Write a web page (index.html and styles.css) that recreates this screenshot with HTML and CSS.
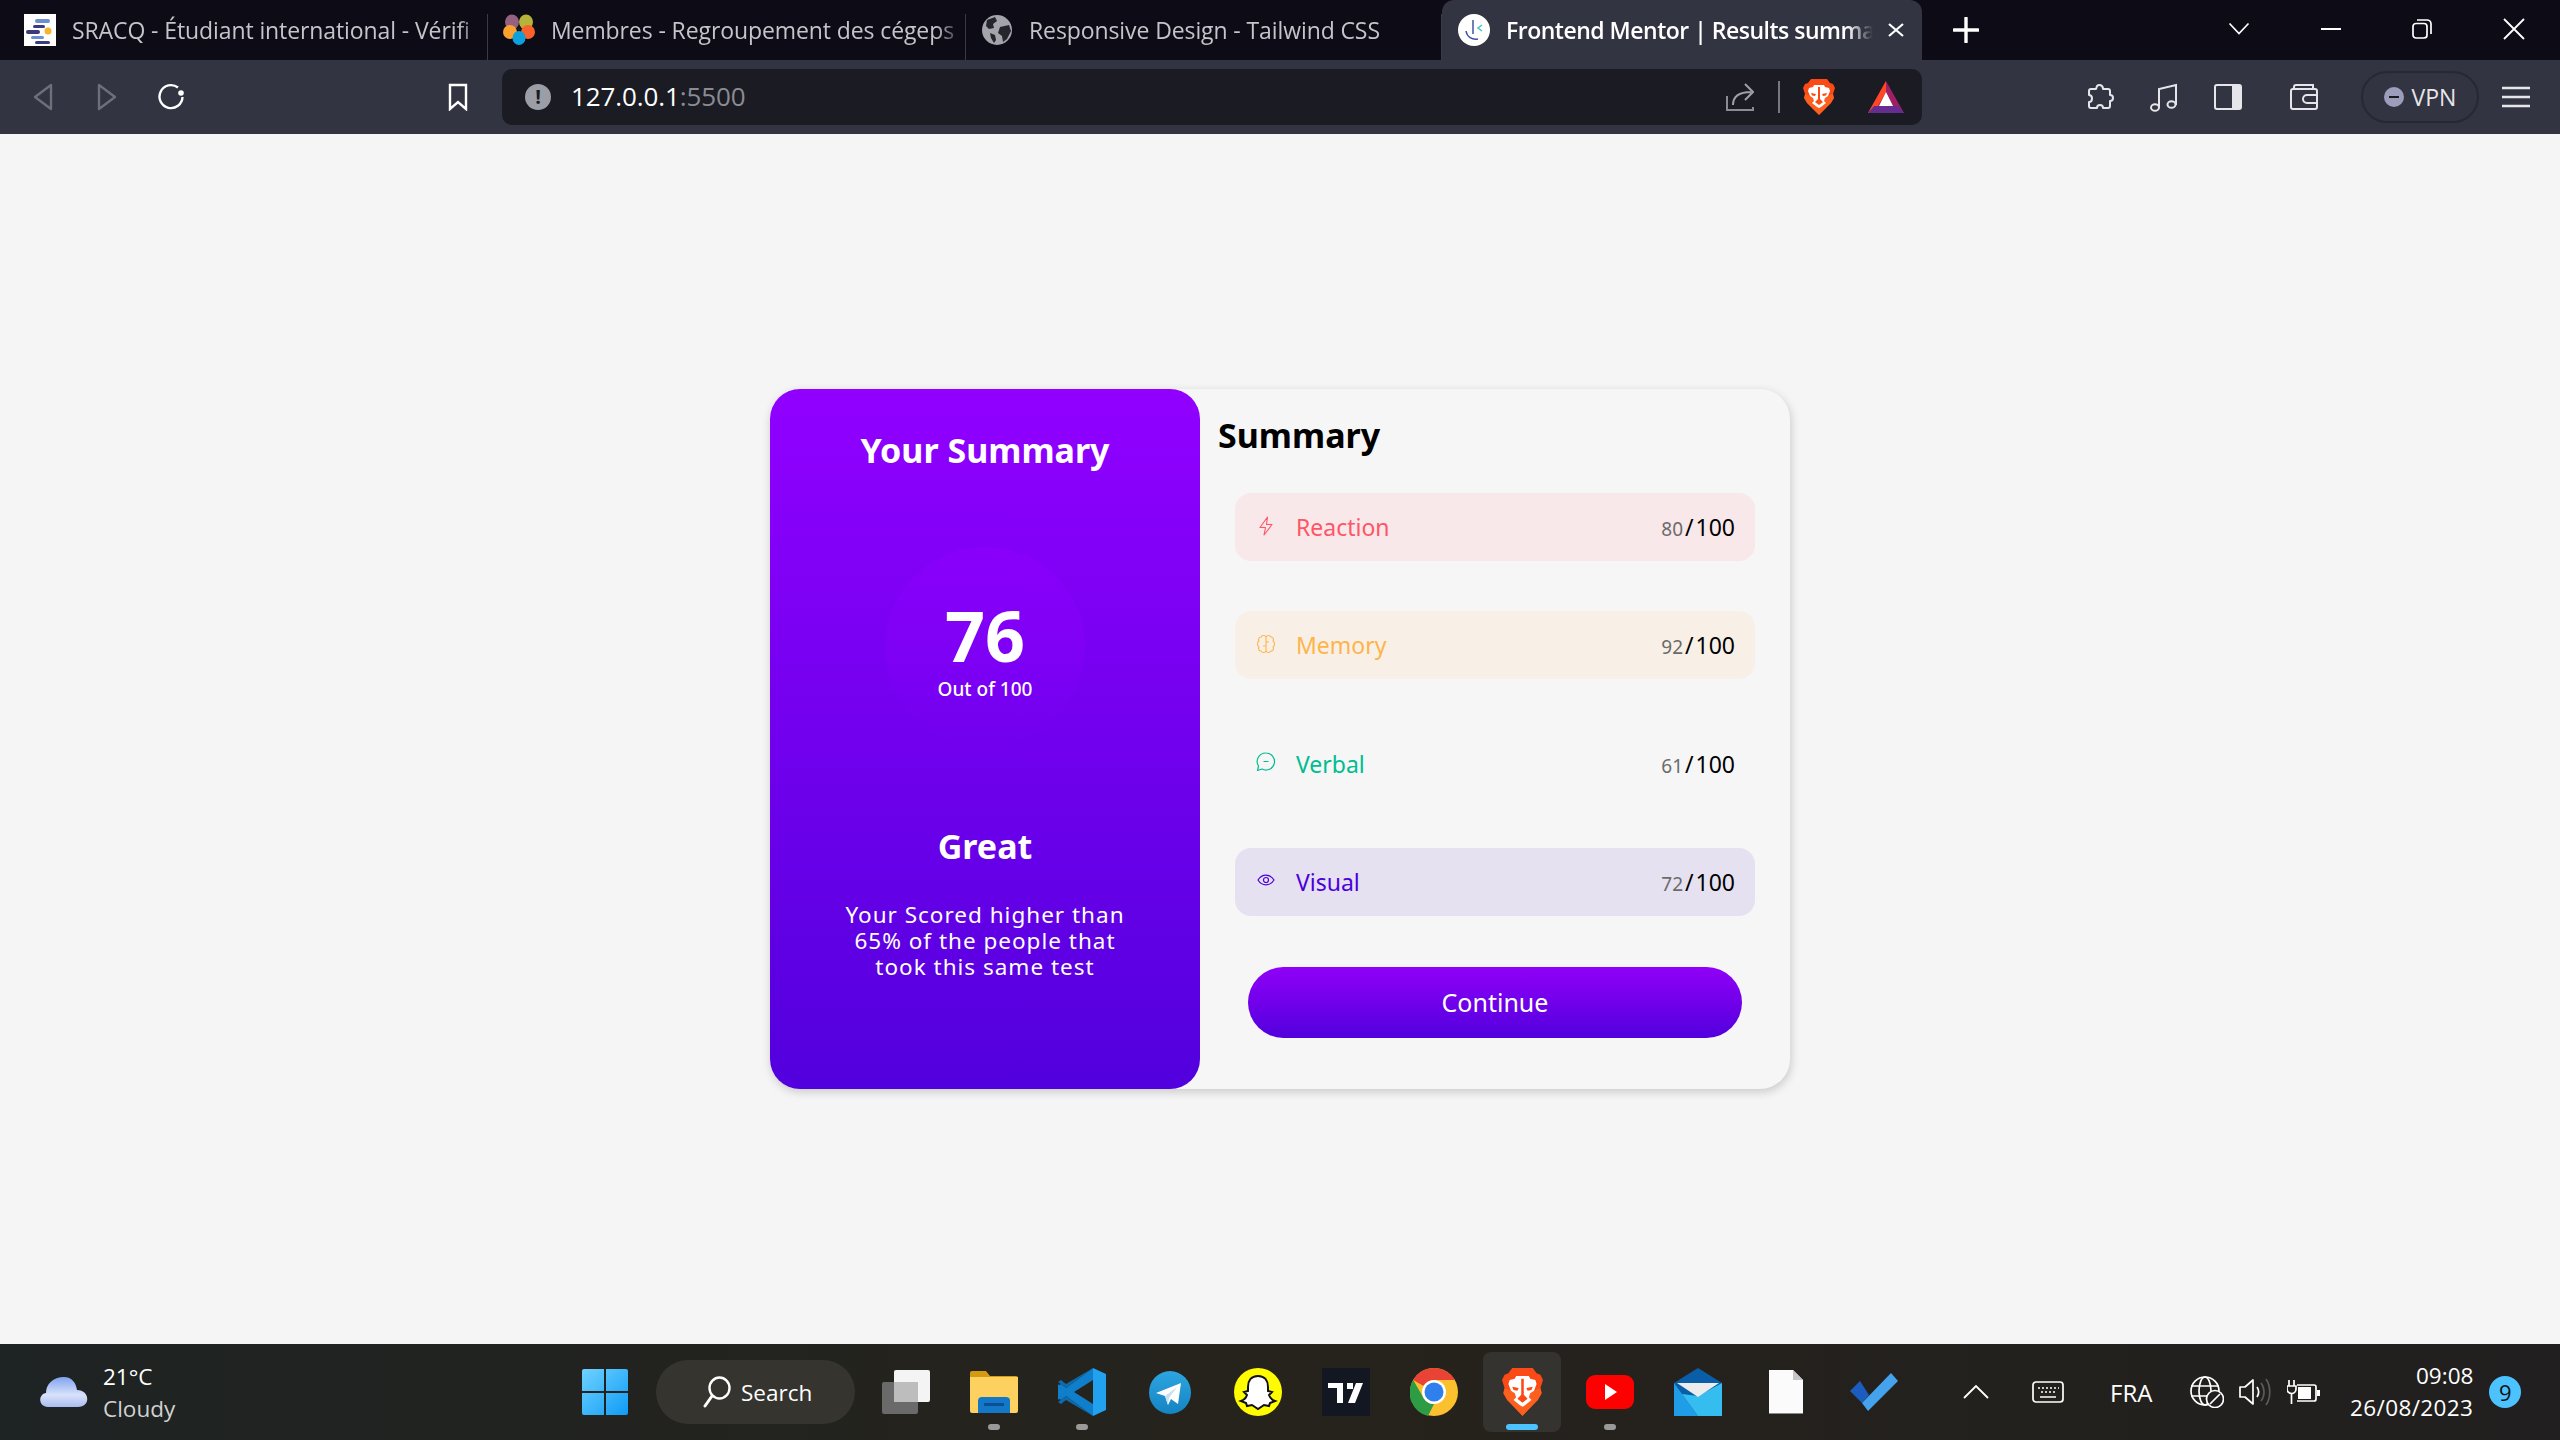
FILE: index.html
```html
<!DOCTYPE html>
<html lang="en">
  <head>
    <meta charset="UTF-8" />
    <meta name="viewport" content="width=device-width, initial-scale=1.0" />
    <title>Frontend Mentor | Results summary</title>
    <link rel="stylesheet" href="styles.css">
  </head>
  <body>
    <svg class="defs" width="0" height="0">
      <symbol id="lion" viewBox="0 0 32 36">
        <path fill="#fb4a16" d="M8 0h16l3 4 3 1 2 4-2 6 1 4-3 5-4 4-6 6-2 2-2-2-6-6-4-4-3-5 1-4-2-6 2-4 3-1z"/>
        <path fill="#ff7a2a" d="M16 36l-2-2-6-6-4-4-3-5 1-4 14 6 14-6 1 4-3 5-4 4-6 6z" opacity=".45"/>
        <path fill="#fff" d="M11 6h10l1 2 4 1 1 3-2 5-3 2-1 3 2 2-5 4-2 1-2-1-5-4 2-2-1-3-3-2-2-5 1-3 4-1z"/>
        <path fill="#fb4a16" d="M15 8h2v12l3 3-4 3-4-3 3-3zM8 14l5 1-1 2-3-.5zM24 14l-5 1 1 2 3-.5z"/>
      </symbol>
    </svg>

    <div class="tabbar">
      <div class="tab tab-first">
        <svg class="favicon" width="32" height="32" viewBox="0 0 32 32">
          <rect width="32" height="32" fill="#fff"/>
          <rect x="11" y="5" width="15" height="4" rx="2" fill="#6d8fd0"/>
          <rect x="9" y="11" width="12" height="3" rx="1.5" fill="#3a3a80"/>
          <rect x="2" y="16" width="14" height="4" rx="2" fill="#3a3a80"/>
          <rect x="7" y="22" width="13" height="3" rx="1.5" fill="#6d8fd0"/>
          <rect x="11" y="27" width="15" height="3" rx="1.5" fill="#3a3a80"/>
          <circle cx="24" cy="17" r="3.5" fill="#f7b32b"/>
        </svg>
        <span class="tab-title">SRACQ - Étudiant international - Vérifi</span>
      </div>
      <div class="tab">
        <svg class="favicon" width="32" height="32" viewBox="0 0 32 32">
          <ellipse cx="9" cy="8" rx="7" ry="7.5" fill="#95617e"/>
          <ellipse cx="23" cy="8" rx="7" ry="7.5" fill="#b5b33a"/>
          <ellipse cx="7" cy="18" rx="7" ry="7" fill="#fba12f"/>
          <ellipse cx="25" cy="18" rx="7" ry="7" fill="#f9622a"/>
          <ellipse cx="16" cy="24" rx="6.5" ry="7" fill="#0ea0dd"/>
          <circle cx="16" cy="15" r="2" fill="#1a1a22"/>
        </svg>
        <span class="tab-title">Membres - Regroupement des cégeps</span>
      </div>
      <div class="tab tab-third">
        <svg class="favicon" width="32" height="32" viewBox="0 0 32 32">
          <circle cx="16" cy="16" r="15" fill="#a3a5ab"/>
          <path fill="#24252d" d="M6 6l8-3 2 4-4 3 1 4-5 1-3-3zM19 13l9-2 2 6-4 8-4 3-1-6-4-3zM9 19l5 2 1 5-2 3-3-5z"/>
        </svg>
        <span class="tab-title">Responsive Design - Tailwind CSS</span>
      </div>
      <div class="tab tab-active">
        <svg class="favicon" width="32" height="32" viewBox="0 0 32 32">
          <circle cx="16" cy="16" r="16" fill="#fff"/>
          <path d="M15 6v14" stroke="#3e54a3" stroke-width="1.5" fill="none"/>
          <path d="M8 17c1 6 6 9 12 8" stroke="#3e54a3" stroke-width="1.5" fill="none"/>
          <path d="M24 11l-4 3 4 3" stroke="#3ec9c4" stroke-width="1.5" fill="none"/>
        </svg>
        <span class="tab-title">Frontend Mentor | Results summa</span>
        <svg class="tab-close" width="16" height="14" viewBox="0 0 16 14">
          <path d="M1 1l14 12M15 1L1 13" stroke="#fff" stroke-width="2.2"/>
        </svg>
      </div>
      <svg class="new-tab" width="26" height="26" viewBox="0 0 26 26">
        <path d="M13 1v24M1 13h24" stroke="#fff" stroke-width="3.4" stroke-linecap="round"/>
      </svg>
      <div class="window-controls">
        <svg class="win-btn" width="22" height="14" viewBox="0 0 22 14">
          <path d="M1.500 1.500l9.500 10 9.500-10" stroke="#fff" stroke-width="1.700" fill="none"/>
        </svg>
        <svg class="win-btn" width="20" height="4" viewBox="0 0 20 4">
          <path d="M0 2h20" stroke="#fff" stroke-width="2"/>
        </svg>
        <svg class="win-btn" width="20" height="20" viewBox="0 0 20 20">
          <rect x="1" y="4.500" width="14" height="14.500" rx="3" stroke="#fff" stroke-width="1.700" fill="none"/>
          <path d="M5 1h10a4 4 0 0 1 4 4v10" stroke="#fff" stroke-width="1.700" fill="none"/>
        </svg>
        <svg class="win-btn" width="22" height="22" viewBox="0 0 22 22">
          <path d="M1 1l20 20M21 1L1 21" stroke="#fff" stroke-width="1.800"/>
        </svg>
      </div>
    </div>

    <div class="toolbar">
      <div class="tool">
        <svg width="22" height="28" viewBox="0 0 22 28">
          <path d="M19 2L3 14l16 12z" stroke="#6d6f79" stroke-width="2.400" fill="none" stroke-linejoin="round"/>
        </svg>
      </div>
      <div class="tool">
        <svg width="22" height="28" viewBox="0 0 22 28">
          <path d="M3 2l16 12L3 26z" stroke="#6d6f79" stroke-width="2.400" fill="none" stroke-linejoin="round"/>
        </svg>
      </div>
      <div class="tool">
        <svg width="28" height="28" viewBox="0 0 28 28">
          <path d="M21 4.500A11.500 11.500 0 1 0 25.500 14" stroke="#fff" stroke-width="2.400" fill="none"/>
          <circle cx="24" cy="10" r="2.800" fill="#fff"/>
        </svg>
      </div>
      <div class="tool tool-bookmark">
        <svg width="20" height="28" viewBox="0 0 20 28">
          <path d="M2 2h16v24l-8-7-8 7z" stroke="#fff" stroke-width="2.400" fill="none"/>
        </svg>
      </div>
      <div class="address">
        <span class="info-dot">!</span>
        <span class="url">127.0.0.1<span class="url-port">:5500</span></span>
        <div class="address-actions">
          <svg width="28" height="30" viewBox="0 0 28 30">
            <path d="M1 14v14h26v-3" stroke="#8b8c93" stroke-width="2" fill="none"/>
            <path d="M7 23c0-9 6-13 18-13M19 2l8 8-8 8" stroke="#a0a1a8" stroke-width="2" fill="none"/>
          </svg>
          <span class="address-sep"></span>
          <svg class="brave-small" width="32" height="36"><use href="#lion"/></svg>
          <svg class="bat" width="36" height="32" viewBox="0 0 36 32">
            <path d="M18 0L0 32h36z" fill="#9e1f63"/>
            <path d="M18 0L0 32h6l12-21z" fill="#ff4724"/>
            <path d="M0 32l6-7h24l6 7z" fill="#662d91"/>
            <path d="M18 11l-7 14h14z" fill="#fff"/>
          </svg>
        </div>
      </div>
      <div class="tools-right">
        <svg width="28" height="28" viewBox="0 0 28 28">
          <path d="M11 3c2-2 6-1 6 3h5c1 0 2 1 2 2v4c4 0 4 6 0 6v5c0 1-1 2-2 2h-5c0-4-6-4-6 0H5c-1 0-2-1-2-2v-4c4 0 4-7 0-7V8c0-1 1-2 2-2h5z" stroke="#e6e6ea" stroke-width="2" fill="none" stroke-linejoin="round"/>
        </svg>
        <svg width="28" height="30" viewBox="0 0 28 30">
          <path d="M9 25V7l17-4v20" stroke="#e6e6ea" stroke-width="2" fill="none"/>
          <ellipse cx="5" cy="25.500" rx="4" ry="3.300" stroke="#e6e6ea" stroke-width="2" fill="none"/>
          <ellipse cx="21.500" cy="22.500" rx="4" ry="3.300" stroke="#e6e6ea" stroke-width="2" fill="none"/>
        </svg>
        <svg width="28" height="26" viewBox="0 0 28 26">
          <rect x="1" y="1" width="26" height="24" rx="2" stroke="#e6e6ea" stroke-width="2" fill="none"/>
          <rect x="18" y="1" width="9" height="24" fill="#e6e6ea"/>
        </svg>
        <svg class="wallet" width="28" height="26" viewBox="0 0 28 26">
          <path d="M4 5V3c0-1 1-2 2-2h17v4" stroke="#e6e6ea" stroke-width="2" fill="none"/>
          <rect x="1" y="5" width="26" height="20" rx="2" stroke="#e6e6ea" stroke-width="2" fill="none"/>
          <path d="M27 11H17a4 4 0 0 0 0 8h10" stroke="#e6e6ea" stroke-width="2" fill="none"/>
        </svg>
        <div class="vpn">
          <span class="vpn-dot"></span>
          <span>VPN</span>
        </div>
        <svg class="menu" width="28" height="22" viewBox="0 0 28 22">
          <path d="M0 2h28M0 11h28M0 20h28" stroke="#e6e6ea" stroke-width="2.400"/>
        </svg>
      </div>
    </div>

    <main class="page">
      <div class="card">
        <section class="result">
          <h1 class="result-title">Your Summary</h1>
          <div class="score-circle">
            <span class="score-value">76</span>
            <span class="score-of">Out of 100</span>
          </div>
          <h2 class="result-grade">Great</h2>
          <p class="result-text">Your Scored higher than<br />65% of the people that<br />took this same test</p>
        </section>
        <section class="summary">
          <h2 class="summary-title">Summary</h2>
          <ul class="rows">
            <li class="row row-reaction">
              <svg class="row-icon" width="20" height="20" viewBox="0 0 20 20">
                <path d="M11.500 1L4 11.500h5.500L8 19l8-10.500h-5.500z" stroke="currentColor" stroke-width="1.100" fill="none" stroke-linejoin="round"/>
              </svg>
              <span class="row-name">Reaction</span>
              <span class="row-score"><span class="row-num">80</span> / 100</span>
            </li>
            <li class="row row-memory">
              <svg class="row-icon" width="20" height="20" viewBox="0 0 20 20">
                <path d="M10 3c-1-2-4-2-5 0-2 0-3 2-2 4-2 1-2 5 0 6-1 2 0 4 2 4 1 2 4 2 5 0 1 2 4 2 5 0 2 0 3-2 2-4 2-1 2-5 0-6 1-2 0-4-2-4-1-2-4-2-5 0zM10 3v14M10 8h3M7 12h3" stroke="currentColor" stroke-width="1.100" fill="none" stroke-linejoin="round"/>
              </svg>
              <span class="row-name">Memory</span>
              <span class="row-score"><span class="row-num">92</span> / 100</span>
            </li>
            <li class="row row-verbal">
              <svg class="row-icon" width="20" height="20" viewBox="0 0 20 20">
                <path d="M10 1a8.500 8.500 0 1 1-4 16l-4.500 1.500 1-4.500A8.500 8.500 0 0 1 10 1zM7.500 9.500h5" stroke="currentColor" stroke-width="1.200" fill="none" stroke-linejoin="round"/>
              </svg>
              <span class="row-name">Verbal</span>
              <span class="row-score"><span class="row-num">61</span> / 100</span>
            </li>
            <li class="row row-visual">
              <svg class="row-icon" width="20" height="20" viewBox="0 0 20 20">
                <path d="M2 10c4-6.500 12-6.500 16 0-4 6.500-12 6.500-16 0z" stroke="currentColor" stroke-width="1.200" fill="none"/>
                <circle cx="10" cy="10" r="2.500" stroke="currentColor" stroke-width="1.200" fill="none"/>
              </svg>
              <span class="row-name">Visual</span>
              <span class="row-score"><span class="row-num">72</span> / 100</span>
            </li>
          </ul>
          <button class="continue">Continue</button>
        </section>
      </div>
    </main>

    <footer class="taskbar">
      <div class="weather">
        <svg width="48" height="30" viewBox="0 0 48 30">
          <defs>
            <linearGradient id="cloud" x1="0" y1="0" x2="0" y2="1">
              <stop offset="0" stop-color="#7fa2ee"/>
              <stop offset=".6" stop-color="#d9e2fb"/>
              <stop offset="1" stop-color="#a9bcf0"/>
            </linearGradient>
          </defs>
          <path fill="url(#cloud)" d="M8 30c-10 0-10-13-2-14 0-9 7-16 18-16 8 0 12 6 13 13 13 0 14 17 1 17z"/>
        </svg>
        <div class="weather-text">
          <span>21°C</span>
          <span class="weather-sub">Cloudy</span>
        </div>
      </div>
      <svg class="start" width="46" height="46" viewBox="0 0 46 46">
        <defs>
          <linearGradient id="win" x1="0" y1="0" x2="1" y2="1">
            <stop offset="0" stop-color="#6fd3ff"/>
            <stop offset="1" stop-color="#0f9bf5"/>
          </linearGradient>
        </defs>
        <path fill="url(#win)" d="M0 2a2 2 0 0 1 2-2h20v22H0zM24 0h20a2 2 0 0 1 2 2v20H24zM0 24h22v22H2a2 2 0 0 1-2-2zM24 24h22v20a2 2 0 0 1-2 2H24z"/>
      </svg>
      <div class="search">
        <svg width="28" height="32" viewBox="0 0 28 32">
          <ellipse cx="16.500" cy="12" rx="10" ry="10.500" stroke="#fff" stroke-width="2.400" fill="none"/>
          <path d="M9 20L2 30" stroke="#fff" stroke-width="3" stroke-linecap="round"/>
        </svg>
        <span>Search</span>
      </div>
      <div class="apps">
        <div class="app">
          <svg width="48" height="44" viewBox="0 0 48 44">
            <rect x="0" y="12" width="36" height="32" rx="2" fill="#6a6a6a"/>
            <rect x="12" y="0" width="36" height="32" rx="2" fill="#f4f4f4"/>
            <rect x="12" y="12" width="24" height="20" fill="#bdbdbd"/>
          </svg>
        </div>
        <div class="app app-open">
          <svg width="48" height="42" viewBox="0 0 48 42">
            <path d="M0 2a2 2 0 0 1 2-2h14l4 5h26a2 2 0 0 1 2 2v6H0z" fill="#d39a12"/>
            <path d="M0 6h48v34a2 2 0 0 1-2 2H2a2 2 0 0 1-2-2z" fill="#fcd15f"/>
            <path d="M8 42V30a4 4 0 0 1 4-4h24a4 4 0 0 1 4 4v12z" fill="#1478c8"/>
            <rect x="14" y="32" width="20" height="3" fill="#0c4f92"/>
          </svg>
        </div>
        <div class="app app-open">
          <svg width="48" height="48" viewBox="0 0 48 48">
            <path d="M35 0l13 6v36l-13 6z" fill="#22a2ee"/>
            <path d="M35 0v12L16 24l19 12v12L8 28l-5 4-3-2v-12l3-2 5 4z" fill="#0f7fcb"/>
            <path d="M35 0L8 20 0 14l3-2 5 4L35 0zM35 48L8 28l-8 6 3 2 5-4z" fill="#0b6bb0"/>
            <path d="M0 16l8 8-8 8z" fill="#0f7fcb"/>
          </svg>
        </div>
        <div class="app">
          <svg width="42" height="43" viewBox="0 0 42 43">
            <defs>
              <linearGradient id="tg" x1="0" y1="0" x2="0" y2="1">
                <stop offset="0" stop-color="#2ca5e0"/>
                <stop offset="1" stop-color="#1584c2"/>
              </linearGradient>
            </defs>
            <ellipse cx="21" cy="21.500" rx="21" ry="21.500" fill="url(#tg)"/>
            <path d="M32 12L7 22l9 3 3 9 3-6 7 5z" fill="#fff"/>
            <path d="M16 25l12-9-8 11-1 7z" fill="#c9dff0"/>
          </svg>
        </div>
        <div class="app">
          <svg width="48" height="48" viewBox="0 0 48 48">
            <circle cx="24" cy="24" r="24" fill="#fffc00"/>
            <path d="M24 8c7 0 10 5 10 11v4l4 1-3 3c1 3 3 5 6 6l-5 2-1 3-5-1-6 4-6-4-5 1-1-3-5-2c3-1 5-3 6-6l-3-3 4-1v-4c0-6 3-11 10-11z" fill="#fff" stroke="#111" stroke-width="2"/>
          </svg>
        </div>
        <div class="app">
          <svg width="48" height="48" viewBox="0 0 48 48">
            <rect width="48" height="48" fill="#131722"/>
            <path d="M6 15h15v20h-6V20H6zM25 15h6v6h-6zM34 15h7l-8 20h-7z" fill="#fff"/>
          </svg>
        </div>
        <div class="app">
          <svg width="48" height="48" viewBox="0 0 48 48">
            <circle cx="24" cy="24" r="24" fill="#fbc02d"/>
            <path d="M24 0a24 24 0 0 1 21 12H24a12 12 0 0 0-10.400 6L3.200 12A24 24 0 0 1 24 0z" fill="#e94335"/>
            <path d="M3.200 12l10.400 18A12 12 0 0 0 24 36l-6 12A24 24 0 0 1 3.200 12z" fill="#2e9b45"/>
            <circle cx="24" cy="24" r="12" fill="#fff"/>
            <circle cx="24" cy="24" r="9.500" fill="#2f7fed"/>
          </svg>
        </div>
        <div class="app app-active">
          <svg width="41" height="48" viewBox="0 0 32 36" preserveAspectRatio="none"><use href="#lion"/></svg>
        </div>
        <div class="app app-open">
          <svg width="48" height="34" viewBox="0 0 48 34">
            <rect width="48" height="34" rx="9" fill="#f00"/>
            <path d="M19 9l12 8-12 8z" fill="#fff"/>
          </svg>
        </div>
        <div class="app">
          <svg width="48" height="48" viewBox="0 0 48 48">
            <path d="M24 0l24 15v33H0V15z" fill="#0a5ea8"/>
            <path d="M0 15l24 33H0z" fill="#1f9de6"/>
            <path d="M48 15v33H24L8 26l16 2z" fill="#35bdf0"/>
            <path d="M3 15h42L24 29z" fill="#ececec"/>
          </svg>
        </div>
        <div class="app">
          <svg width="34" height="44" viewBox="0 0 34 44">
            <path d="M0 0h24l10 10v34H0z" fill="#fbfbfb"/>
            <path d="M24 0l10 10H24z" fill="#c4c4c4"/>
            <path d="M0 43h34v1H0z" fill="#8a8a8a"/>
          </svg>
        </div>
        <div class="app">
          <svg width="48" height="38" viewBox="0 0 48 38">
            <path d="M0 18l10-10 9 14-7 8z" fill="#1b5cbe"/>
            <path d="M12 30L41 0l7 8-30 30z" fill="#45a3ee"/>
          </svg>
        </div>
      </div>
      <div class="tray">
        <svg class="tray-caret" width="26" height="14" viewBox="0 0 26 14">
          <path d="M1 13L13 1l12 12" stroke="#fff" stroke-width="1.800" fill="none"/>
        </svg>
        <svg class="tray-keys" width="32" height="22" viewBox="0 0 32 22">
          <rect x="1" y="1" width="30" height="20" rx="3" stroke="#fff" stroke-width="1.700" fill="none"/>
          <path d="M6 7h2M10 7h2M14 7h2M18 7h2M22 7h2M26 7h1M9 11h2M13 11h2M17 11h2M21 11h2M8 16h16" stroke="#fff" stroke-width="1.700"/>
        </svg>
        <span class="tray-lang">FRA</span>
        <svg class="tray-globe" width="34" height="32" viewBox="0 0 34 32">
          <circle cx="15" cy="15" r="14" stroke="#fff" stroke-width="1.700" fill="none"/>
          <ellipse cx="15" cy="15" rx="6" ry="14" stroke="#fff" stroke-width="1.700" fill="none"/>
          <path d="M1 10h28M1 20h16" stroke="#fff" stroke-width="1.700"/>
          <circle cx="25" cy="23" r="8.500" fill="#211f1f" stroke="#fff" stroke-width="1.700"/>
          <path d="M20 28l10-10" stroke="#fff" stroke-width="1.700"/>
        </svg>
        <svg class="tray-sound" width="32" height="28" viewBox="0 0 32 28">
          <path d="M1 9h5l8-7v24l-8-7H1z" stroke="#fff" stroke-width="1.700" fill="none" stroke-linejoin="round"/>
          <path d="M18 9c2 3 2 7 0 10" stroke="#fff" stroke-width="1.700" fill="none"/>
          <path d="M22 5c4 5 4 13 0 18M27 1c5 7 5 19 0 26" stroke="#5a5a5a" stroke-width="1.700" fill="none"/>
        </svg>
        <svg class="tray-power" width="33" height="24" viewBox="0 0 33 24">
          <path d="M2 0v6M7 0v6M0 6h9v3a4 4 0 0 1-9 0zM4.500 13v11" stroke="#fff" stroke-width="1.700" fill="none"/>
          <path d="M10 5h17a2 2 0 0 1 2 2v12a2 2 0 0 1-2 2H10" stroke="#fff" stroke-width="1.700" fill="none"/>
          <rect x="11" y="7" width="13" height="12" fill="#fff"/>
          <rect x="30" y="10" width="3" height="6" fill="#fff"/>
        </svg>
        <div class="clock">
          <span>09:08</span>
          <span class="clock-date">26/08/2023</span>
        </div>
        <span class="notif">9</span>
      </div>
    </footer>
  </body>
</html>
```
FILE: styles.css
```css
* {
  box-sizing: border-box;
}

body {
  margin: 0;
  width: 2560px;
  height: 1440px;
  display: flex;
  flex-direction: column;
  overflow: hidden;
  background-color: #f5f5f5;
  font-family: "Open Sans", sans-serif;
}

.defs {
  position: absolute;
}

svg {
  display: block;
  flex-shrink: 0;
}

/* tabs */
.tabbar {
  height: 60px;
  display: flex;
  background-color: #0c0b16;
  color: #c4c4ca;
}

.tab {
  width: 478px;
  height: 46px;
  margin-top: 14px;
  padding-left: 15px;
  display: flex;
  align-items: flex-start;
  gap: 16px;
  border-right: 1px solid #3a3a44;
  font-size: 23px;
}

.tab-first {
  width: 488px;
  padding-left: 24px;
  gap: 16px;
}

.tab-third {
  width: 476px;
}

.tab-title {
  flex: 1;
  min-width: 0;
  height: 32px;
  line-height: 32px;
  letter-spacing: -0.1px;
  white-space: nowrap;
  -webkit-mask-image: linear-gradient(90deg, #000 93%, transparent 100%);
  mask-image: linear-gradient(90deg, #000 93%, transparent 100%);
}

.tab-active {
  width: 480px;
  height: 60px;
  margin-top: 0;
  padding: 14px 0 0 16px;
  border: none;
  border-radius: 12px 12px 0 0;
  background-color: #323441;
  color: #fff;
}

.tab-active .tab-title {
  flex: none;
  width: 367px;
  font-weight: 600;
  letter-spacing: -0.5px;
}

.tab-close {
  margin-left: -1px;
  margin-top: 9px;
}

.new-tab {
  margin: 17px 0 0 31px;
}

.window-controls {
  margin-left: auto;
  height: 58px;
  display: flex;
  align-items: center;
}

.win-btn {
  margin-right: 71px;
}

.win-btn:last-child {
  margin-right: 35px;
}

/* toolbar */
.toolbar {
  height: 74px;
  padding-left: 11px;
  display: flex;
  align-items: center;
  background-color: #323441;
}

.tool {
  width: 64px;
  display: flex;
  justify-content: center;
}

.tool-bookmark {
  margin-left: 223px;
  margin-right: 12px;
}

.address {
  width: 1420px;
  height: 56px;
  padding: 0 18px 0 23px;
  display: flex;
  align-items: center;
  border-radius: 10px;
  background-color: #1a1b23;
  color: #fff;
}

.info-dot {
  width: 26px;
  height: 26px;
  border-radius: 50%;
  background-color: #9b9ea6;
  color: #1a1b23;
  font-size: 20px;
  font-weight: 700;
  line-height: 26px;
  text-align: center;
}

.url {
  margin: -2px 0 0 20px;
  font-size: 26px;
  letter-spacing: -0.1px;
}

.url-port {
  color: #8b8c93;
}

.address-actions {
  margin-left: auto;
  display: flex;
  align-items: center;
}

.address-sep {
  width: 2px;
  height: 32px;
  margin: 0 23px 0 24px;
  background-color: #77787f;
}

.bat {
  margin-left: 33px;
}

.tools-right {
  flex: 1;
  padding-left: 164px;
  display: flex;
  align-items: center;
  color: #e6e6ea;
}

.tools-right svg {
  margin-right: 36px;
}

.tools-right .wallet {
  margin: 0 43px 0 12px;
}

.tools-right .menu {
  margin: 0 0 0 23px;
}

.vpn {
  width: 118px;
  height: 52px;
  display: flex;
  align-items: center;
  justify-content: center;
  gap: 8px;
  border: 2px solid #272832;
  border-radius: 26px;
  font-size: 23px;
}

.vpn-dot {
  width: 20px;
  height: 20px;
  border-radius: 50%;
  background-color: #9b9dbb;
  position: relative;
}

.vpn-dot::after {
  content: "";
  position: absolute;
  left: 5px;
  top: 9px;
  width: 10px;
  height: 2px;
  background-color: #1a1b23;
}

/* card */
.page {
  flex: 1;
  display: flex;
  align-items: center;
  justify-content: center;
}

.card {
  width: 1020px;
  height: 700px;
  display: flex;
  border-radius: 30px;
  background-color: #f6f6f6;
  box-shadow: 1px 3px 10px rgba(0, 0, 0, 0.18);
  font-family: "Noto Sans", sans-serif;
}

.result {
  width: 430px;
  display: flex;
  flex-direction: column;
  align-items: center;
  border-radius: 30px;
  background: linear-gradient(#9100ff, #5200dd);
  color: #fff;
}

.result-title {
  margin: 36px 0 0;
  font-size: 34px;
  font-weight: 700;
  line-height: 50px;
}

.score-circle {
  width: 200px;
  height: 200px;
  margin-top: 72px;
  padding-top: 3px;
  display: flex;
  flex-direction: column;
  align-items: center;
  justify-content: center;
  border-radius: 50%;
  background: linear-gradient(rgba(145, 0, 255, 0.45), rgba(120, 0, 240, 0));
}

.score-value {
  font-size: 70px;
  font-weight: 700;
  line-height: 78px;
}

.score-of {
  margin-top: 2px;
  font-size: 19px;
  font-weight: 500;
  line-height: 26px;
}

.result-grade {
  margin: 74px 0 0;
  font-size: 34px;
  font-weight: 700;
  line-height: 50px;
}

.result-text {
  margin: 31px 0 0;
  font-size: 22.500px;
  line-height: 26px;
  letter-spacing: 1px;
  text-align: center;
}

.summary {
  flex: 1;
  display: flex;
  flex-direction: column;
}

.summary-title {
  margin: 22px 0 0 18px;
  font-size: 34px;
  font-weight: 700;
  line-height: 48px;
  color: #000;
}

.rows {
  margin: 34px 35px 0;
  padding: 0;
  list-style-type: none;
  display: flex;
  flex-direction: column;
  gap: 50.300px;
}

.row {
  height: 68px;
  padding: 0 20px 0 21px;
  display: flex;
  align-items: center;
  gap: 20px;
  border-radius: 16px;
  font-size: 23px;
}

.row-icon {
  margin-top: -3px;
}

.row-reaction {
  background-color: #f8e8e9;
  color: #ff5566;
}

.row-memory {
  background-color: #f8f0e7;
  color: #ffb44a;
}

.row-verbal {
  color: #00bd91;
}

.row-visual {
  background-color: #e6e1f0;
  color: #4b00dc;
}

.row-score {
  margin-left: auto;
  color: #000;
  font-size: 23px;
  word-spacing: -4px;
}

.row-num {
  font-size: 19px;
  color: #6b6b6b;
}

.continue {
  width: 494px;
  height: 71px;
  margin: 51px 0 0 48px;
  padding: 0;
  border: none;
  border-radius: 36px;
  background: linear-gradient(#9000f8, #5200dd);
  color: #fff;
  font-family: inherit;
  font-size: 25px;
  cursor: pointer;
}

/* taskbar */
.taskbar {
  height: 96px;
  padding-left: 40px;
  display: flex;
  align-items: center;
  background: linear-gradient(90deg, #1e2323, #26231c 50%, #211f1f);
  color: #fff;
  font-size: 22.500px;
}

.weather {
  width: 542px;
  display: flex;
  align-items: center;
  gap: 15px;
}

.weather-text {
  margin-top: 2px;
  display: flex;
  flex-direction: column;
  line-height: 32px;
}

.weather-sub {
  color: #d2d2d2;
}

.search {
  width: 199px;
  height: 64px;
  margin-left: 28px;
  padding-left: 47px;
  display: flex;
  align-items: center;
  gap: 10px;
  border-radius: 32px;
  background-color: #35342f;
}

.apps {
  margin-left: 7px;
  display: flex;
  align-items: center;
}

.app {
  width: 88px;
  height: 96px;
  display: flex;
  align-items: center;
  justify-content: center;
  position: relative;
}

.app-open::after {
  content: "";
  position: absolute;
  left: 38px;
  bottom: 10px;
  width: 12px;
  height: 6px;
  border-radius: 3px;
  background-color: #9a9a9a;
}

.app-active::before {
  content: "";
  position: absolute;
  left: 5px;
  top: 8px;
  width: 78px;
  height: 80px;
  border-radius: 8px;
  background-color: #34332f;
}

.app-active svg {
  position: relative;
}

.app-active::after {
  content: "";
  position: absolute;
  left: 28px;
  bottom: 10px;
  width: 32px;
  height: 6px;
  border-radius: 3px;
  background-color: #4cc2ff;
}

.tray {
  flex: 1;
  padding-left: 45px;
  display: flex;
  align-items: center;
}

.tray-keys {
  margin-left: 43px;
}

.tray-lang {
  margin-left: 46px;
  font-size: 24px;
}

.tray-globe {
  margin-left: 38px;
}

.tray-sound {
  margin-left: 15px;
}

.tray-power {
  margin-left: 16px;
}

.clock {
  margin-left: 30px;
  width: 123px;
  display: flex;
  flex-direction: column;
  align-items: flex-end;
  line-height: 32px;
  white-space: nowrap;
}

.clock-date {
  letter-spacing: 0.4px;
}

.notif {
  width: 32px;
  height: 32px;
  margin-left: 16px;
  border-radius: 50%;
  background-color: #4cc2ff;
  color: #111;
  font-size: 22px;
  line-height: 32px;
  text-align: center;
}
```
